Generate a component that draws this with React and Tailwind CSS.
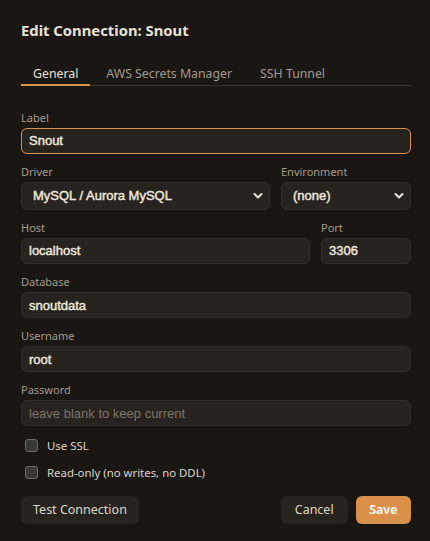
import { useState } from 'react'

const ui = { fontFamily: '"Noto Sans", "Open Sans", sans-serif' }
const field = { fontFamily: '"Liberation Sans", Arial, sans-serif' }

function Label({ children }) {
  return (
    <p className="text-[11px] leading-[15px] text-[#a39a8c] mb-[3px]" style={ui}>
      {children}
    </p>
  )
}

function Input({ value, placeholder, focused, onChange }) {
  return (
    <input
      value={value}
      placeholder={placeholder}
      onChange={onChange}
      className={`block w-full h-[26px] rounded-[6px] bg-[#27231f] px-[7px] text-[13px] text-[#ece6dc] placeholder:text-[#7d766c] outline-none border ${
        focused ? 'border-[#d9914a]' : 'border-[#332e28]'
      } ${value ? '[-webkit-text-stroke:0.45px_#ece6dc]' : ''}`}
      style={field}
    />
  )
}

function Select({ value, options }) {
  return (
    <div className="relative">
      <select
        defaultValue={value}
        className="block w-full h-[28px] appearance-none rounded-[6px] bg-[#27231f] border border-[#332e28] pl-[11px] pr-6 text-[13px] text-[#ece6dc] [-webkit-text-stroke:0.45px_#ece6dc] outline-none"
        style={field}
      >
        {options.map((o) => (
          <option key={o}>{o}</option>
        ))}
      </select>
      <svg
        className="absolute right-[7px] top-[10px] pointer-events-none"
        width="10"
        height="8"
        viewBox="0 0 10 8"
        fill="none"
        stroke="#ece6dc"
        strokeWidth="2"
        strokeLinecap="round"
        strokeLinejoin="round"
      >
        <path d="M1.5 2l3.5 3.5L8.5 2" />
      </svg>
    </div>
  )
}

function Check({ label }) {
  const [on, setOn] = useState(false)
  return (
    <label className="flex items-center h-[14px] gap-[9px] pl-[4px] cursor-pointer">
      <span
        onClick={() => setOn(!on)}
        className={`w-[13px] h-[13px] rounded-[3px] border ${on ? 'bg-[#d9914a] border-[#d9914a]' : 'bg-[#3a3835] border-[#6b6863]'}`}
      />
      <span className="text-[11.4px] text-[#ddd6ca]" style={ui}>
        {label}
      </span>
    </label>
  )
}

export default function App() {
  const [tab, setTab] = useState('General')
  const [name, setName] = useState('Snout')
  const [host, setHost] = useState('localhost')
  const [port, setPort] = useState('3306')
  const [db, setDb] = useState('snoutdata')
  const [user, setUser] = useState('root')
  const [pass, setPass] = useState('')

  const tabs = ['General', 'AWS Secrets Manager', 'SSH Tunnel']

  return (
    <div className="w-[430px] h-[541px] bg-[#1a1713] pl-[21px] pr-[19px] pt-[19px]" style={ui}>
      <h2 className="text-[14.8px] leading-[22px] font-bold text-[#e8e2d8]">Edit Connection: Snout</h2>

      <div className="mt-[24px] flex gap-[4px] border-b border-[#38332d]">
        {tabs.map((t) => (
          <button
            key={t}
            onClick={() => setTab(t)}
            className={`px-[12px] pb-[1px] text-[12.3px] leading-[18px] border-b-[2px] -mb-px ${
              tab === t ? 'text-[#e8e2d8] border-[#d9914a]' : 'text-[#a39a8c] border-transparent'
            }`}
          >
            {t}
          </button>
        ))}
      </div>

      <div className="mt-[23.5px] flex flex-col gap-[10.2px]">
        <div>
          <Label>Label</Label>
          <Input value={name} focused onChange={(e) => setName(e.target.value)} />
        </div>

        <div className="flex gap-[11px]">
          <div className="flex-1">
            <Label>Driver</Label>
            <Select value="MySQL / Aurora MySQL" options={['MySQL / Aurora MySQL', 'PostgreSQL', 'SQLite']} />
          </div>
          <div className="w-[130px]">
            <Label>Environment</Label>
            <Select value="(none)" options={['(none)', 'development', 'staging', 'production']} />
          </div>
        </div>

        <div className="flex gap-[11px]">
          <div className="flex-1">
            <Label>Host</Label>
            <Input value={host} onChange={(e) => setHost(e.target.value)} />
          </div>
          <div className="w-[90px]">
            <Label>Port</Label>
            <Input value={port} onChange={(e) => setPort(e.target.value)} />
          </div>
        </div>

        <div>
          <Label>Database</Label>
          <Input value={db} onChange={(e) => setDb(e.target.value)} />
        </div>

        <div>
          <Label>Username</Label>
          <Input value={user} onChange={(e) => setUser(e.target.value)} />
        </div>

        <div>
          <Label>Password</Label>
          <Input value={pass} placeholder="leave blank to keep current" onChange={(e) => setPass(e.target.value)} />
        </div>
      </div>

      <div className="mt-[12px] flex flex-col gap-[13px]">
        <Check label="Use SSL" />
        <Check label="Read-only (no writes, no DDL)" />
      </div>

      <div className="mt-[17px] flex items-center">
        <button className="h-[28px] px-[12px] rounded-[6px] bg-[#27231f] text-[12.5px] text-[#ddd6ca]">
          Test Connection
        </button>
        <div className="ml-auto flex gap-[8px]">
          <button className="h-[28px] px-[14px] rounded-[6px] bg-[#27231f] text-[12.5px] text-[#ddd6ca]">Cancel</button>
          <button className="h-[28px] px-[13.5px] rounded-[6px] bg-[#d9914a] text-[12.5px] font-semibold text-white">Save</button>
        </div>
      </div>
    </div>
  )
}
